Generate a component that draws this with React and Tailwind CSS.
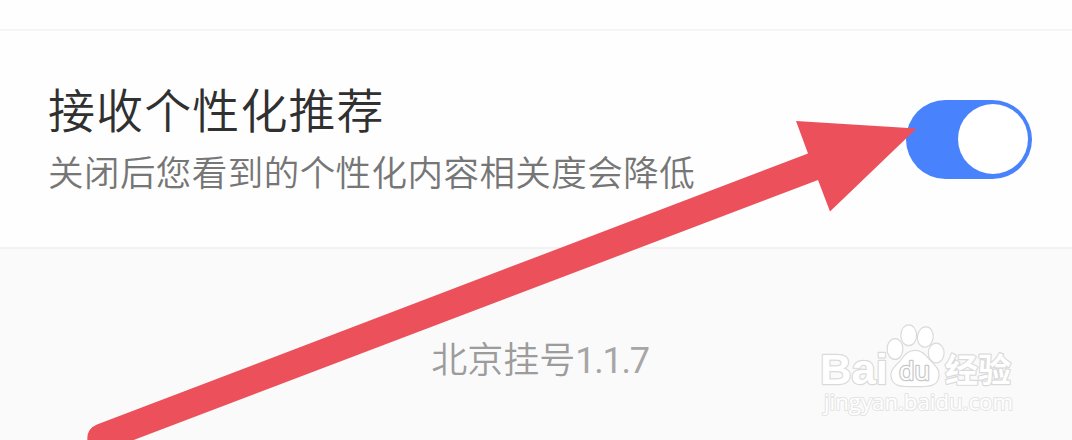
import React from 'react';

const Toggle = () => (
  <button
    role="switch"
    aria-checked="true"
    className="flex h-[79px] w-[126px] shrink-0 items-center justify-end rounded-full bg-[#4882fc] p-[4.5px]"
  >
    <span className="h-[70px] w-[70px] rounded-full bg-white" />
  </button>
);

const Arrow = () => (
  <svg className="pointer-events-none absolute inset-0" width="1072" height="440" viewBox="0 0 1072 440" fill="none">
    <path
      d="M916.5 128.5 L796 121 L808 153.5 L97 424.5 Q86 429 87.5 441 L92 456 L135 439.5 L818 180 L830 211.5 Z"
      fill="#eb505b"
    />
  </svg>
);

const Watermark = () => (
  <svg
    className="absolute left-[810px] top-[315px]"
    width="220"
    height="110"
    viewBox="810 315 220 110"
    fill="#fff"
    stroke="#dadada"
    strokeWidth="2.4"
    paintOrder="stroke"
    strokeLinejoin="round"
  >
    <text x="820" y="384" fontSize="43" fontWeight="700" textLength="68" lengthAdjust="spacingAndGlyphs" className="font-['Liberation_Sans',sans-serif]">
      Bai
    </text>
    <ellipse cx="895" cy="349" rx="7.3" ry="9.8" />
    <ellipse cx="908.7" cy="335.3" rx="7.3" ry="9.8" />
    <ellipse cx="925.3" cy="337" rx="7.3" ry="9.6" transform="rotate(8 925.3 337)" />
    <ellipse cx="936.2" cy="353" rx="7.3" ry="9.3" />
    <path d="M915 351 C923 351 926 357 931 362 C936 367 940 371 938 378 C936 386 929 386 915 386 C901 386 894 386 892 378 C890 371 895 367 900 362 C904 357 907 351 915 351 Z" />
    <text x="899" y="380" fontSize="26" textLength="31" lengthAdjust="spacingAndGlyphs" strokeWidth="2.6" stroke="#c8c8c8" className="font-['Open_Sans',sans-serif]">
      du
    </text>
    <text x="945" y="382" fontSize="33" fontWeight="700" textLength="66" className="font-['Noto_Sans_CJK_SC',sans-serif]">
      经验
    </text>
    <text x="824" y="410" fontSize="22" textLength="189" lengthAdjust="spacingAndGlyphs" stroke="#e4e4e4" strokeWidth="2" className="font-['Open_Sans',sans-serif]">
      jingyan.baidu.com
    </text>
  </svg>
);

const App = () => {
  return (
    <div className="relative flex h-[440px] w-[1072px] flex-col overflow-hidden bg-[#fafafa] font-['Noto_Sans_CJK_SC',sans-serif]">
      <div className="h-[31px] border-b-2 border-[#f5f5f5] bg-[#fefefe]" />
      <div className="flex h-[218px] items-center justify-between border-b-2 border-[#f2f2f2] bg-[#fefefe] pl-12 pr-10">
        <div className="flex flex-col pb-1">
          <h1 className="text-[47px] font-[350] leading-[68px] tracking-[1.1px] text-[#303030]">接收个性化推荐</h1>
          <p className="text-[35.5px] font-[350] leading-[58px] tracking-[0.45px] text-[#767676]">关闭后您看到的个性化内容相关度会降低</p>
        </div>
        <Toggle />
      </div>
      <div className="flex flex-1 justify-center pl-2 pt-[81px]">
        <span className="text-[36px] font-[350] leading-[54px] text-[#9c9c9c]">
          北京挂号<span className="font-['Roboto',sans-serif] text-[36px] font-normal tracking-[-1.2px] text-[#a6a6a6]">1.1.7</span>
        </span>
      </div>
      <Watermark />
      <Arrow />
    </div>
  );
};

export default App;
